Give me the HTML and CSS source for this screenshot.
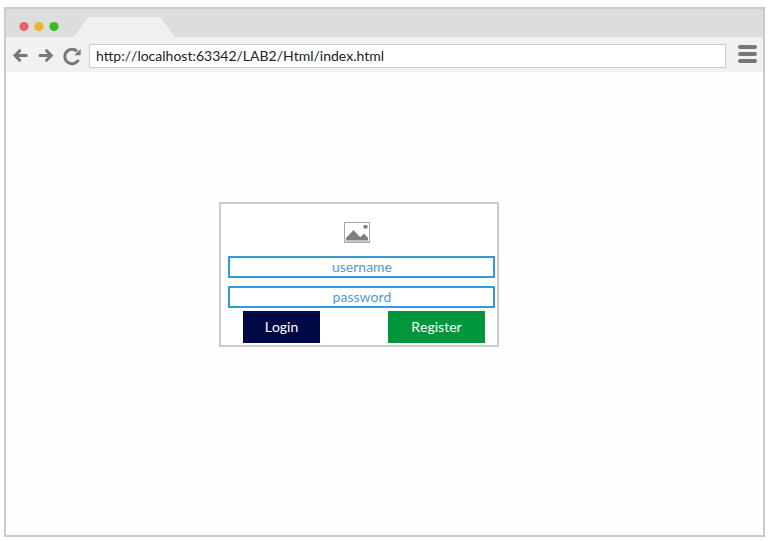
FILE: index.html
```
<!DOCTYPE html>
<html lang="en">
<head>
<meta charset="utf-8">
<title>Login</title>
<link rel="stylesheet" href="styles.css">
</head>
<body>
<div class="browser">
  <header class="tabs">
    <svg class="lights" width="42" height="12" viewBox="0 0 42 12">
      <circle cx="6" cy="5.5" r="4.6" fill="#eb5f6c"/>
      <circle cx="21" cy="5.5" r="4.6" fill="#ebb52f"/>
      <circle cx="36" cy="5.5" r="4.6" fill="#3cba1f"/>
    </svg>
    <svg class="tab" width="102" height="20" viewBox="0 0 102 20"><path d="M0.5 20L15.5 0H87L102 20Z" fill="#f1f1f1"/></svg>
  </header>
  <nav class="toolbar">
    <svg class="nav-icons" width="72" height="20" viewBox="0 0 72 20" fill="none" stroke="#777" stroke-width="3">
      <path d="M4 8.5H15.3M8.7 3.7L4 8.5L8.7 13.3" stroke-linecap="round"/>
      <path d="M29 8.5H40.3M35.6 3.7L40.3 8.5L35.6 13.3" stroke-linecap="round"/>
      <path d="M67.5 12.9A7.3 7.3 0 1 1 66 4.1"/>
      <path d="M69.7 2.1V8.2H63.2Z" fill="#777" stroke="none"/>
    </svg>
    <div class="address">http://localhost:63342/LAB2/Html/index.html</div>
    <div class="menu"><span></span><span></span><span></span></div>
  </nav>
  <main class="page">
    <form class="card">
      <svg class="picture" width="26" height="21" viewBox="0 0 26 21">
        <rect x=".5" y=".5" width="25" height="20" fill="#fff" stroke="#a8a8a8"/>
        <path d="M1 19.5H25" stroke="#ccc"/>
        <path d="M2 18.5V16L9.5 8L15 14L16.5 15L20 11.5L24 16V18.5Z" fill="#808080"/>
        <ellipse cx="21.5" cy="4.8" rx="2.3" ry="2" fill="#808080"/>
      </svg>
      <div class="field">username</div>
      <div class="field">password</div>
      <div class="actions">
        <button type="button" class="login">Login</button>
        <button type="button" class="register">Register</button>
      </div>
    </form>
  </main>
</div>
</body>
</html>
```
FILE: styles.css
```
* { box-sizing: border-box; }
body {
  margin: 0;
  padding: 7px 4px 4px;
  background: #fff;
  font: 14px/18px Lato, sans-serif;
  font-kerning: none;
}
.browser {
  width: 761px;
  height: 530px;
  border: 2px solid #cbcbcb;
  background: #fefefe;
}
.tabs {
  display: flex;
  height: 28px;
  background: #dcdedb;
}
.lights { margin: 12px 0 0 12px; }
.tab { margin: 8px 0 0 13px; }
.toolbar {
  display: flex;
  height: 35px;
  padding: 7px 6px 0 5px;
  background: #f1f1f1;
}
.nav-icons { margin: 3px 6px 0 0; }
.address {
  width: 637px;
  height: 24px;
  padding: 2px 6px;
  border: 1px solid #cbcbcb;
  background: #fff;
  color: #222;
}
.menu {
  display: flex;
  flex-direction: column;
  gap: 3px;
  margin: 1px 0 0 12px;
}
.menu span {
  width: 19px;
  height: 4px;
  border-radius: 2px;
  background: #777;
}
.page { padding: 130px 0 0 213px; }
.card {
  display: flex;
  flex-direction: column;
  width: 280px;
  height: 145px;
  padding: 18px 2px 0 7px;
  border: 2px solid #cbcbcb;
  background: #fff;
}
.picture { margin: 0 0 13px 116px; }
.field {
  height: 22px;
  margin-bottom: 8px;
  padding-left: 1px;
  border: 2px solid #3498db;
  color: #5699c8;
  text-align: center;
}
.actions {
  display: flex;
  justify-content: space-between;
  margin: -5px 10px 0 15px;
}
button {
  height: 32px;
  padding: 0;
  border: 0;
  color: #fff;
  font: inherit;
  font-kerning: none;
}
.login { width: 77px; background: #000846; }
.register { width: 97px; background: #00963c; }
```
